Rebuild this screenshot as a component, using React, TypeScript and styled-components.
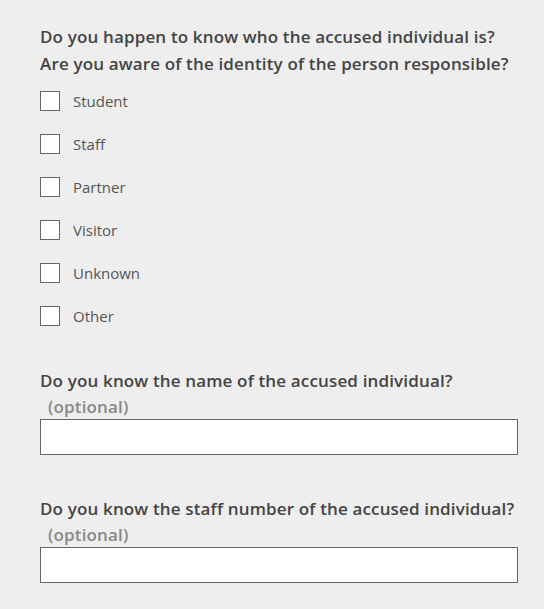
import React from 'react';
import styled, { createGlobalStyle } from 'styled-components';

const GlobalStyle = createGlobalStyle`
  body {
    margin: 0;
    background: #eeeeee;
    font-family: "Open Sans", "Liberation Sans", sans-serif;
  }
`;

const Form = styled.form`
  width: 478px;
  padding: 23px 0 26px 40px;
`;

const Question = styled.h3`
  margin: 0;
  font-size: 17px;
  font-weight: 600;
  letter-spacing: 0.15px;
  line-height: 27px;
  color: #444444;
`;

const Optional = styled.div`
  margin: 0 0 0 8px;
  font-size: 17px;
  font-weight: 600;
  letter-spacing: 0.15px;
  line-height: 25px;
  color: #888888;
`;

const CheckList = styled.div`
  display: flex;
  flex-direction: column;
  gap: 23px;
  margin: 14px 0 0;
`;

const CheckRow = styled.label`
  display: flex;
  align-items: center;
  gap: 13px;
  height: 20px;
  font-size: 15px;
  color: #555555;
`;

const Box = styled.span`
  width: 18px;
  height: 18px;
  border: 1px solid #666666;
  background: #ffffff;
`;

const Field = styled.div<{ $top: number }>`
  margin-top: ${(p) => p.$top}px;
`;

const TextInput = styled.input`
  display: block;
  box-sizing: border-box;
  width: 478px;
  height: 36px;
  margin: 0;
  border: 1px solid #666666;
  background: #ffffff;
  font-family: inherit;
  font-size: 15px;
  outline: none;
`;

const options = ['Student', 'Staff', 'Partner', 'Visitor', 'Unknown', 'Other'];

const App: React.FC = () => {
  return (
    <>
      <GlobalStyle />
      <Form>
        <Question>
          Do you happen to know who the accused individual is?
          <br />
          Are you aware of the identity of the person responsible?
        </Question>
        <CheckList>
          {options.map((o) => (
            <CheckRow key={o}>
              <Box />
              {o}
            </CheckRow>
          ))}
        </CheckList>
        <Field $top={41}>
          <Question>Do you know the name of the accused individual?</Question>
          <Optional>(optional)</Optional>
          <TextInput type="text" />
        </Field>
        <Field $top={40}>
          <Question>Do you know the staff number of the accused individual?</Question>
          <Optional>(optional)</Optional>
          <TextInput type="text" />
        </Field>
      </Form>
    </>
  );
};

export default App;
